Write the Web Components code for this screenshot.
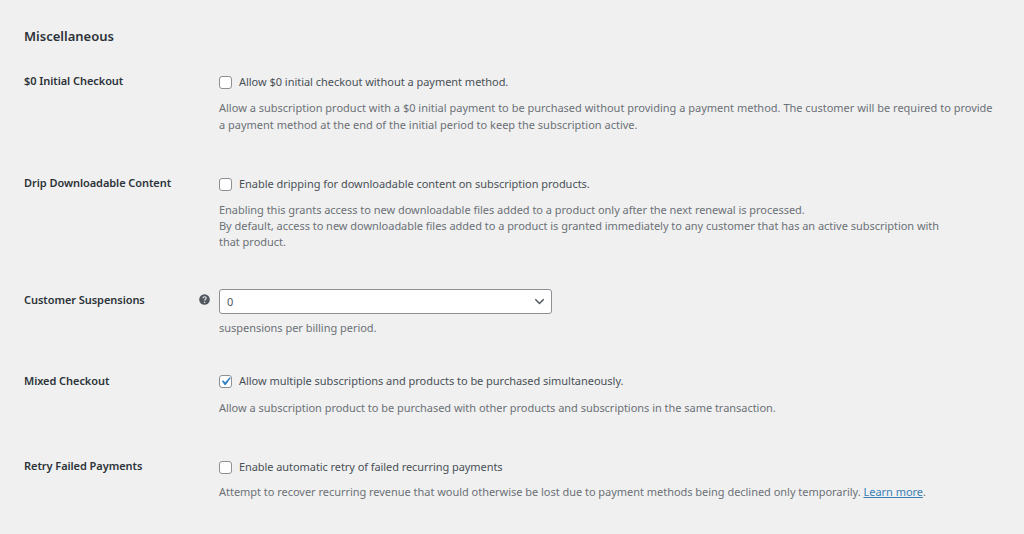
<!DOCTYPE html>
<html>
<head>
<meta charset="utf-8">
<title>Miscellaneous</title>
<style>
    html, body { margin: 0; padding: 0; background: #f0f0f1; }
    body { font-family: "Noto Sans", "Open Sans", sans-serif; font-size: 11px; color: #3c434a; overflow: hidden; height: 534px; }
</style>
</head>
<body>
<settings-section heading="Miscellaneous">
    <settings-row label="$0 Initial Checkout" style="--row-height: 102px; --note-spacing: 0; --note-line: 17px; --note-top: 9px">
        <check-field>Allow $0 initial checkout without a payment method.</check-field>
        <field-note>Allow a subscription product with a $0 initial payment to be purchased without providing a payment method. The customer will be required to provide<br>a payment method at the end of the initial period to keep the subscription active.</field-note>
    </settings-row>
    <settings-row label="Drip Downloadable Content" style="--row-height: 113px">
        <check-field>Enable dripping for downloadable content on subscription products.</check-field>
        <field-note>Enabling this grants access to new downloadable files added to a product only after the next renewal is processed.<br>By default, access to new downloadable files added to a product is granted immediately to any customer that has an active subscription with<br>that product.</field-note>
    </settings-row>
    <settings-row label="Customer Suspensions" help style="--row-height: 84px; --label-top: 3px">
        <select-field value="0"></select-field>
        <field-note tight>suspensions per billing period.</field-note>
    </settings-row>
    <settings-row label="Mixed Checkout" style="--row-height: 86px; --label-top: 0; --note-top: 11px">
        <check-field checked>Allow multiple subscriptions and products to be purchased simultaneously.</check-field>
        <field-note>Allow a subscription product to be purchased with other products and subscriptions in the same transaction.</field-note>
    </settings-row>
    <settings-row label="Retry Failed Payments" style="--row-height: 60px; --note-top: 9px; --check-spacing: -0.07px">
        <check-field>Enable automatic retry of failed recurring payments</check-field>
        <field-note>Attempt to recover recurring revenue that would otherwise be lost due to payment methods being declined only temporarily. <a href="#">Learn more</a>.</field-note>
    </settings-row>
</settings-section>

<script>
class SettingsSection extends HTMLElement {
    constructor() {
        super();
        this.attachShadow({ mode: 'open' });
    }

    connectedCallback() {
        const heading = this.getAttribute('heading') || '';
        this.shadowRoot.innerHTML = `
            <style>
                :host { display: block; padding: 27px 24px 0; }
                h2 { margin: 0 0 29px; font-size: 13px; line-height: 18px; font-weight: 600; color: #2c3338; }
            </style>
            <h2>${heading}</h2>
            <slot></slot>
        `;
    }
}

class SettingsRow extends HTMLElement {
    constructor() {
        super();
        this.attachShadow({ mode: 'open' });
    }

    connectedCallback() {
        const label = this.getAttribute('label') || '';
        const help = this.hasAttribute('help') ? '<help-tip></help-tip>' : '';
        this.shadowRoot.innerHTML = `
            <style>
                :host { display: grid; grid-template-columns: 195px 1fr; height: var(--row-height, 100px); }
                .label { display: flex; justify-content: space-between; align-items: flex-start; margin-top: var(--label-top, -1px); padding-right: 9px; font-weight: 600; letter-spacing: -0.06px; color: #2c3338; line-height: 16px; }
                .field { display: flex; flex-direction: column; min-width: 0; }
            </style>
            <div class="label"><span>${label}</span>${help}</div>
            <div class="field"><slot></slot></div>
        `;
    }
}

class CheckField extends HTMLElement {
    constructor() {
        super();
        this.attachShadow({ mode: 'open' });
    }

    connectedCallback() {
        const tick = this.hasAttribute('checked')
            ? '<svg viewBox="0 0 20 20" width="17" height="17"><path d="M14.83 4.89l1.34.94-5.81 8.38H9.02L5.78 9.67l1.34-1.25 2.57 2.4z" fill="#3582c4"/></svg>'
            : '';
        this.shadowRoot.innerHTML = `
            <style>
                :host { display: flex; align-items: center; gap: 7px; height: 16px; line-height: 16px; color: #4a5056; letter-spacing: var(--check-spacing, -0.03px); }
                .box { box-sizing: border-box; width: 13px; height: 13px; flex: none; display: flex; align-items: center; justify-content: center; background: #fff; border: 1px solid #8c8f94; border-radius: 3px; }
                svg { flex: none; }
            </style>
            <span class="box">${tick}</span>
            <span><slot></slot></span>
        `;
    }
}

class SelectField extends HTMLElement {
    constructor() {
        super();
        this.attachShadow({ mode: 'open' });
    }

    connectedCallback() {
        const value = this.getAttribute('value') || '';
        this.shadowRoot.innerHTML = `
            <style>
                :host { box-sizing: border-box; display: flex; align-items: center; justify-content: space-between; width: 333px; height: 25px; padding: 0 6px 0 7px; background: #fff; border: 1px solid #8c8f94; border-radius: 3px; color: #50575e; line-height: 16px; }
            </style>
            <span>${value}</span>
            <svg viewBox="0 0 12 8" width="11" height="7"><path d="M1.2 1.5L6 6.2l4.8-4.7" fill="none" stroke="#50575e" stroke-width="1.7"/></svg>
        `;
    }
}

class FieldNote extends HTMLElement {
    constructor() {
        super();
        this.attachShadow({ mode: 'open' });
    }

    connectedCallback() {
        const top = this.hasAttribute('tight') ? '6px' : 'var(--note-top, 10px)';
        this.shadowRoot.innerHTML = `
            <style>
                :host { display: block; margin-top: ${top}; line-height: var(--note-line, 16px); color: #6c7176; white-space: nowrap; letter-spacing: var(--note-spacing, -0.03px); }
                ::slotted(a) { color: #3a7fb5; }
            </style>
            <slot></slot>
        `;
    }
}

class HelpTip extends HTMLElement {
    constructor() {
        super();
        this.attachShadow({ mode: 'open' });
    }

    connectedCallback() {
        this.shadowRoot.innerHTML = `
            <style>
                :host { display: block; width: 11px; height: 11px; margin-top: 2px; }
                svg { display: block; }
            </style>
            <svg viewBox="0 0 11 11" width="11" height="11">
                <circle cx="5.5" cy="5.5" r="5.3" fill="#50575e"/>
                <path d="M3.9 4.3c0-1 .7-1.6 1.7-1.6s1.6.6 1.6 1.4c0 1.1-1.5 1.1-1.5 2.3" fill="none" stroke="#f0f0f1" stroke-width="1.1"/>
                <circle cx="5.6" cy="8.2" r=".7" fill="#f0f0f1"/>
            </svg>
        `;
    }
}

customElements.define('settings-section', SettingsSection);
customElements.define('settings-row', SettingsRow);
customElements.define('check-field', CheckField);
customElements.define('select-field', SelectField);
customElements.define('field-note', FieldNote);
customElements.define('help-tip', HelpTip);
</script>
</body>
</html>
